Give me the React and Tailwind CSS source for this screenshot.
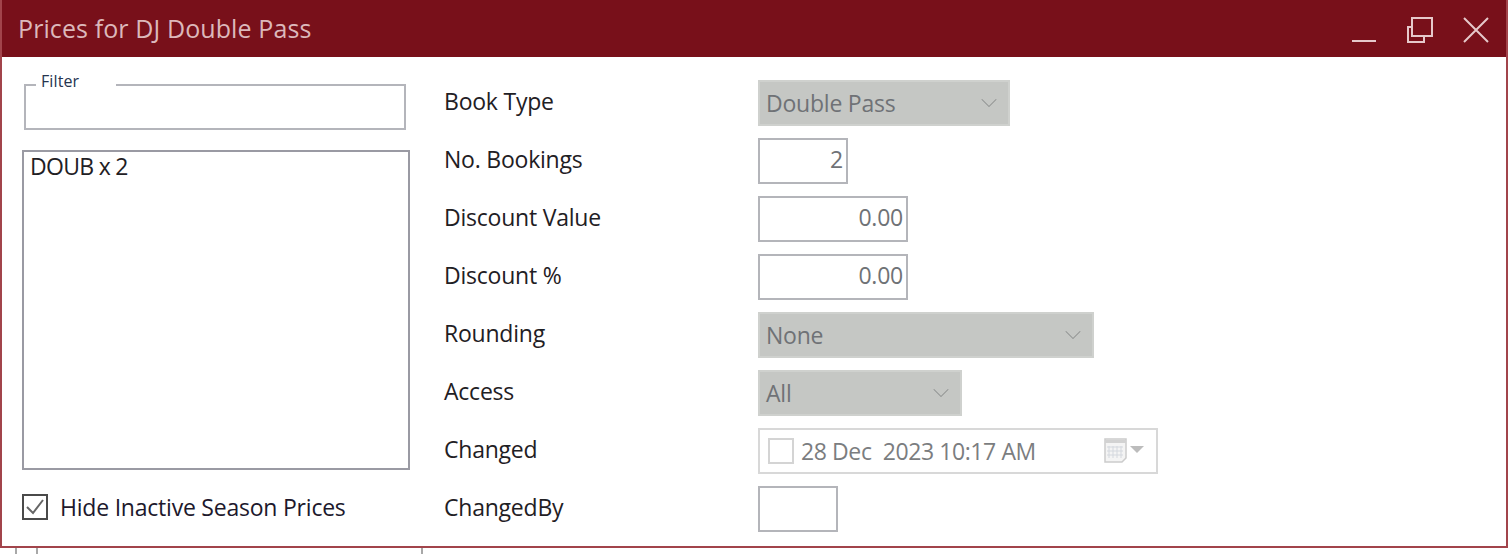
import React from 'react';
import { ChevronDown } from 'lucide-react';

const FONT = "font-['Open_Sans','Noto_Sans',sans-serif]";

function Select({ width, value }) {
  return (
    <div className={`${width} h-[46px] bg-[#c5c7c4] border-2 border-[#cfd1ce] flex items-center justify-between pl-[6px] pr-[5px] text-[#6f7276]`}>
      <span>{value}</span>
      <ChevronDown size={28} strokeWidth={0.9} className="text-[#8f9291]" />
    </div>
  );
}

function NumberBox({ width, value }) {
  return (
    <div className={`${width} h-[46px] bg-white border-2 border-[#b4b5ba] flex items-center justify-end pr-[3px] pb-[4px] text-[#6f7276]`}>
      {value}
    </div>
  );
}

function DatePicker() {
  return (
    <div className="w-[400px] h-[46px] border-2 border-[#d8d8d8] flex items-center pl-[8px] pr-[10px] text-[#7b7d80]">
      <span className="w-[26px] h-[26px] border-2 border-[#d4d4d4] mr-[7px]" />
      <span className="whitespace-pre tracking-[-0.4px]">28 Dec  2023 10:17 AM</span>
      <svg width="42" height="26" viewBox="0 0 42 26" className="ml-auto">
        <path d="M1 1h21v19l-4 4H1z" fill="#f4f4f4" stroke="#cbcbcb" strokeWidth="1.5" />
        <path d="M1 2h21v3H1z" fill="#d2d2d2" />
        <path d="M5 8v12M9 8v12M13 8v12M17 8v12M3 9h16M3 13h16M3 17h16" stroke="#d4d8de" strokeWidth="1" fill="none" />
        <path d="M26 8h14l-7 7z" fill="#bcbcbc" />
      </svg>
    </div>
  );
}

const rows = [
  { label: 'Book Type', control: <Select width="w-[252px]" value="Double Pass" /> },
  { label: 'No. Bookings', control: <NumberBox width="w-[90px]" value="2" /> },
  { label: 'Discount Value', control: <NumberBox width="w-[150px]" value="0.00" /> },
  { label: 'Discount %', control: <NumberBox width="w-[150px]" value="0.00" /> },
  { label: 'Rounding', control: <Select width="w-[336px]" value="None" /> },
  { label: 'Access', control: <Select width="w-[204px]" value="All" /> },
  { label: 'Changed', control: <DatePicker /> },
  { label: 'ChangedBy', control: <NumberBox width="w-[80px]" value="" /> },
];

export default function App() {
  return (
    <div className={`w-[1508px] h-[554px] bg-white overflow-hidden text-[23px] text-[#1f2024] tracking-[-0.22px] ${FONT}`}>
      <div className="h-[548px] border-2 border-t-0 border-[#a2444b] flex flex-col">
        {/* Title bar */}
        <div className="h-[57px] bg-[#78101a] flex items-center pl-[16px] text-[#dcb8bb] text-[25px] tracking-[0.1px] shrink-0">
          <span>Prices for DJ Double Pass</span>
          <svg width="150" height="57" viewBox="0 0 150 57" fill="none" stroke="#e6c9cb" strokeWidth="2" className="ml-auto mr-[10px]">
            <path d="M6 41h24" />
            <path d="M66 18h20v18H66z" />
            <path d="M66 27h-4v15h16v-6" />
            <path d="M118 18l24 24M142 18l-24 24" />
          </svg>
        </div>

        {/* Body */}
        <div className="flex-1 flex pl-[20px]">
          <div className="w-[388px] flex flex-col shrink-0">
            <fieldset className="ml-[2px] mt-[16px] w-[382px] h-[57px] border-2 border-[#b4b5bb] -mb-[1px]">
              <legend className="ml-[10px] px-[5px] pb-[8px] w-[80px] text-[16px] leading-[16px] tracking-[0.1px] text-[#26344f]">Filter</legend>
            </fieldset>
            <div className="mt-[21px] w-[388px] h-[320px] border-2 border-[#9a9aa3] pl-[6px] leading-[28px] tracking-[-0.7px]">DOUB x 2</div>
            <label className="mt-[20px] flex items-center gap-[12px]">
              <span className="w-[26px] h-[26px] border-2 border-[#4a4a4a] flex items-center justify-center">
                <svg width="20" height="20" viewBox="0 0 20 20" fill="none" stroke="#666" strokeWidth="2">
                  <path d="M2 10l6 6L18 3" />
                </svg>
              </span>
              <span className="text-[#20182c]">Hide Inactive Season Prices</span>
            </label>
          </div>

          <div className="ml-[34px] mt-[23px] grid grid-cols-[314px_auto] gap-y-[12px] content-start justify-start">
            {rows.map((row) => (
              <React.Fragment key={row.label}>
                <div className="h-[46px] flex items-center -mt-[2px]">{row.label}</div>
                {row.control}
              </React.Fragment>
            ))}
          </div>
        </div>
      </div>

      {/* Window behind */}
      <div className="h-[6px] flex">
        <div className="ml-[15px] w-[23px] border-x-2 border-[#a8a8a8]" />
        <div className="ml-[383px] w-[2px] bg-[#a8a8a8]" />
      </div>
    </div>
  );
}
